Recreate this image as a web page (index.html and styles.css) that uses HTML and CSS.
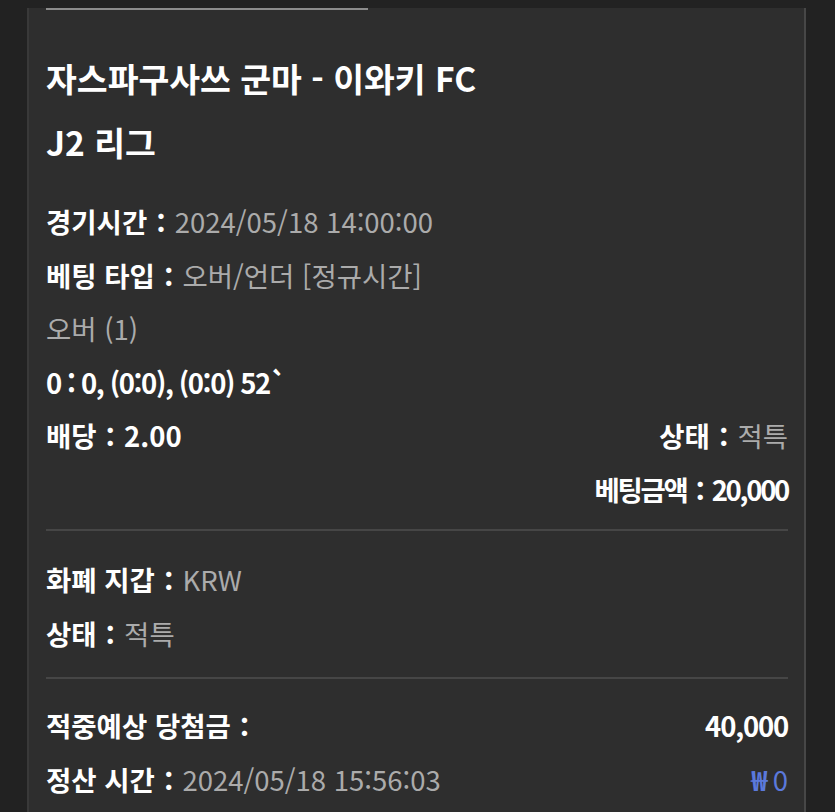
FILE: index.html
```html
<!DOCTYPE html>
<html lang="ko">
<head>
<meta charset="utf-8">
<title>베팅 상세</title>
<link rel="stylesheet" href="styles.css">
</head>
<body>
<div class="card">
  <div class="topline"></div>
  <h1 class="title">자스파구사쓰 군마 - 이와키 FC<br>J2 리그</h1>
  <div class="section first">
    <div class="row"><span class="lbl">경기시간：</span><span class="val">2024/05/18 14:00:00</span></div>
    <div class="row"><span class="lbl">베팅 타입：</span><span class="val">오버/언더 [정규시간]</span></div>
    <div class="row"><span class="val">오버 (1)</span></div>
    <div class="row"><span class="lbl score">0 : 0, (0:0), (0:0) 52`</span></div>
    <div class="row split"><span class="lbl">배당：2.00</span><span><span class="lbl">상태：</span><span class="val">적특</span></span></div>
    <div class="row right"><span class="lbl tight">베팅금액：20,000</span></div>
  </div>
  <div class="divider"></div>
  <div class="section second">
    <div class="row"><span class="lbl">화폐 지갑：</span><span class="val">KRW</span></div>
    <div class="row"><span class="lbl">상태：</span><span class="val">적특</span></div>
  </div>
  <div class="divider"></div>
  <div class="section third">
    <div class="row split"><span class="lbl">적중예상 당첨금：</span><span class="lbl amount">40,000</span></div>
    <div class="row split"><span><span class="lbl">정산 시간：</span><span class="val">2024/05/18 15:56:03</span></span><span class="won"><span class="won-sign">₩</span> 0</span></div>
  </div>
</div>
</body>
</html>
```
FILE: styles.css
```css
html, body {
  margin: 0;
  padding: 0;
  background: #222222;
  height: 100%;
  overflow: hidden;
}
body {
  font-family: "Noto Sans CJK KR", "Noto Sans", sans-serif;
  color: #ffffff;
}
.card {
  margin-left: 27px;
  width: 779px;
  min-height: 812px;
  box-sizing: border-box;
  background: #2e2e2e;
  border-left: 2px solid #393939;
  border-right: 2px solid #474747;
  padding: 0 16px 0 17px;
}
.topline {
  margin-top: 8px;
  width: 322px;
  height: 2px;
  background: #8c8c8c;
}
.title {
  margin: 36px 0 0;
  font-size: 33.5px;
  font-weight: 700;
  line-height: 64px;
}
.section {
  font-size: 27.5px;
  line-height: 53.5px;
}
.section.first { margin-top: 21px; }
.section.second { margin-top: 22px; }
.section.third { margin-top: 20px; }
.row {
  white-space: nowrap;
}
.row.split {
  display: flex;
  justify-content: space-between;
}
.row.right {
  text-align: right;
}
.lbl {
  font-weight: 700;
  color: #ffffff;
}
.val {
  font-weight: 400;
  color: #ababab;
}
.score {
  letter-spacing: -1.4px;
}
.tight {
  letter-spacing: -2.3px;
}
.amount {
  letter-spacing: -1.2px;
}
.won {
  font-weight: 400;
  color: #5b79db;
}
.won-sign {
  font-weight: 700;
  letter-spacing: -1px;
}
.divider {
  height: 2px;
  background: #464646;
}
.section.first + .divider { margin-top: 13px; }
.section.second + .divider { margin-top: 17px; }
```
